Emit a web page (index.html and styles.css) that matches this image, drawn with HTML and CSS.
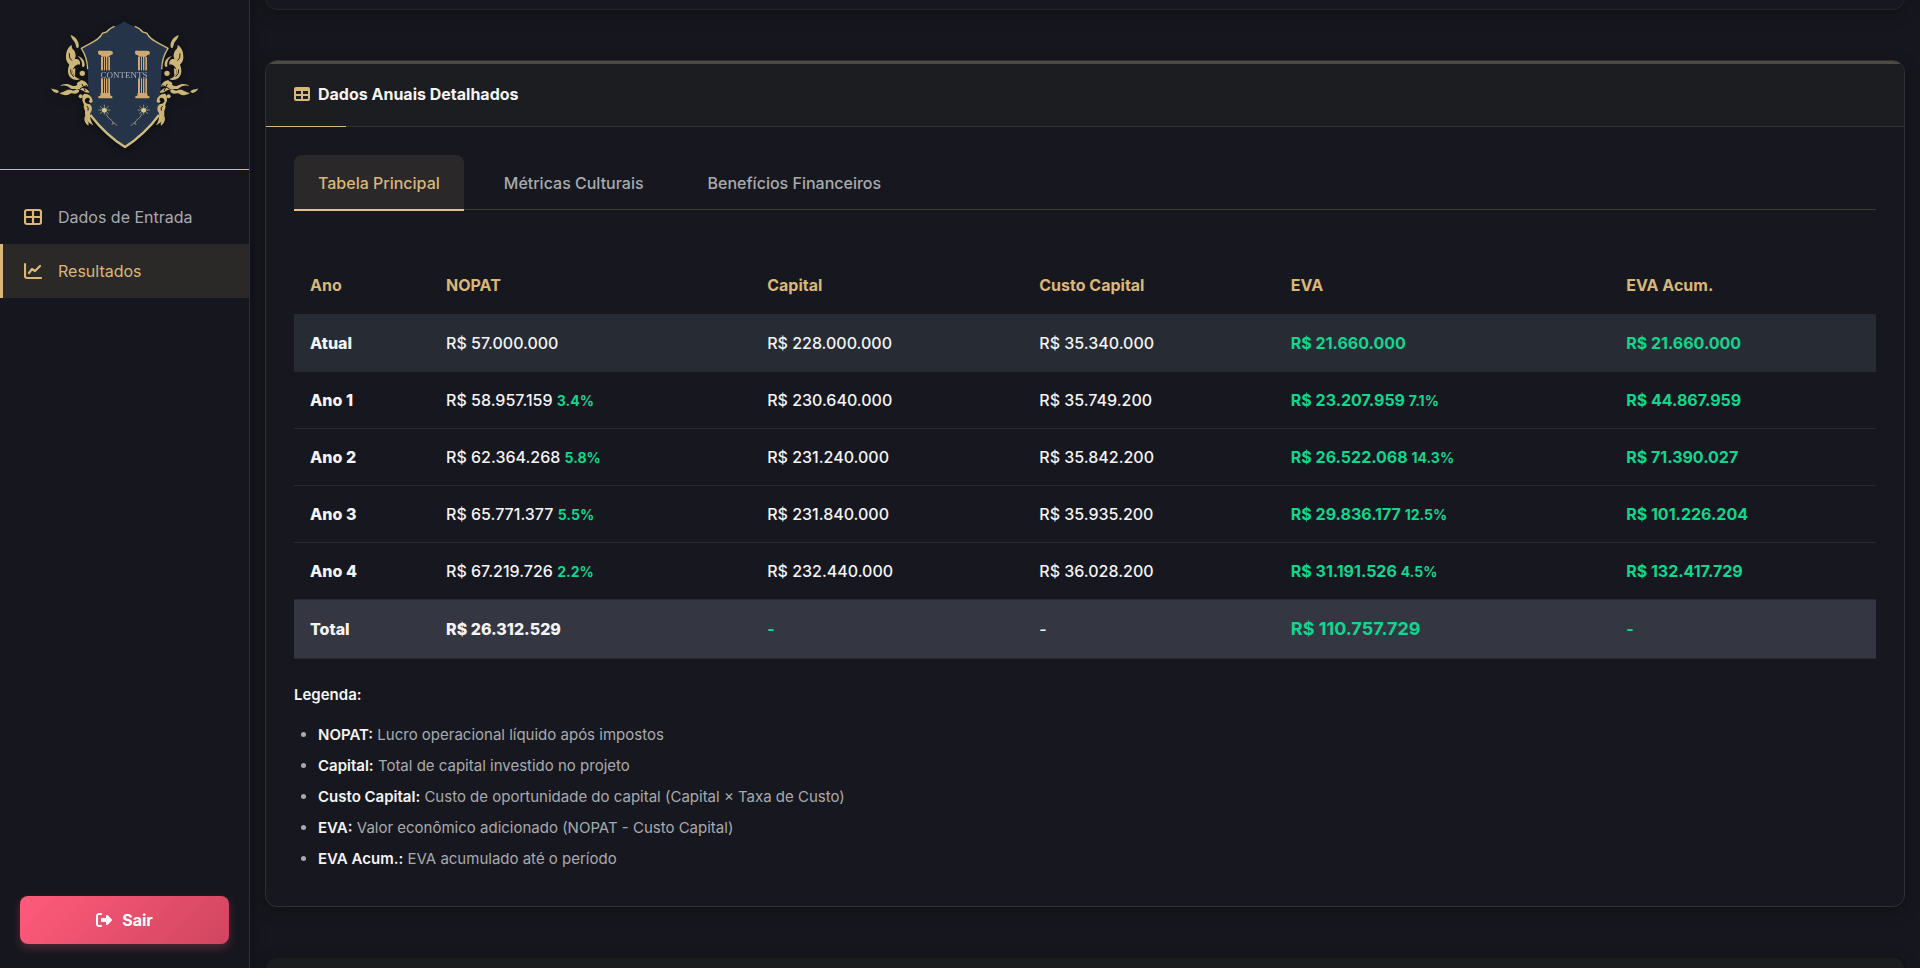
FILE: index.html
```html
<!DOCTYPE html>
<html lang="pt-BR">
<head>
    <meta charset="UTF-8">
    <meta name="viewport" content="width=device-width, initial-scale=1.0">
    <title>Resultados</title>
    <link rel="stylesheet" href="styles.css">
</head>
<body>
    <aside class="sidebar">
        <div class="sidebar-logo">
            <svg viewBox="0 0 510 450" role="img" aria-label="Contents">
                <defs>
                    <g id="ornament" fill="#cdb577">
                        <!-- upper leaves -->
                        <path d="M92 75 C106 80 119 94 116 111 C112 119 108 111 107 104 C104 92 94 88 92 75Z"/>
                        <path d="M96 105 C84 110 77 125 78 145 C79 156 84 160 88 164 C82 178 82 194 92 203 C102 211 114 211 120 207 C106 203 97 194 98 183 C100 169 111 161 120 164 C122 152 114 145 104 148 C110 138 106 126 101 120 C96 116 94 111 96 105Z"/>
                        <path d="M112 138 C124 140 135 151 134 166 C133 173 128 172 126 169 C128 156 122 145 112 138Z"/>
                        <path d="M99 178 L106 174 L105 199 C99 193 97 185 99 178Z"/>
                        <circle cx="127" cy="190" r="8"/>
                        <!-- side branch -->
                        <path d="M33 235 C39 239 45 237 53 241 C59 245 56 249 50 249 C41 247 36 242 33 235Z"/>
                        <path d="M60 229 C69 219 85 221 96 227 C107 231 113 226 122 211 C133 211 143 219 145 230 C136 226 134 232 127 231 C137 236 148 240 148 248 C137 251 131 241 122 239 C108 234 97 241 89 233 C80 226 70 224 60 229Z"/>
                        <path d="M58 249 C71 247 77 239 86 239 C95 239 101 244 107 239 C117 235 121 244 113 249 C104 254 95 247 89 252 C81 258 68 256 58 249Z"/>
                        <path d="M110 222 C114 214 121 213 128 215 L120 228Z"/>
                        <!-- lower curls -->
                        <circle cx="122" cy="259" r="6"/>
                        <path d="M133 251 C145 250 158 261 158 274 C155 281 148 279 146 274 C155 268 145 259 137 266 C132 271 135 279 143 281 C156 282 160 298 151 309 C149 320 151 332 160 346 C143 337 135 326 135 308 C137 302 132 298 131 290 C135 282 126 277 127 267 C127 259 128 254 133 251Z"/>
                        <path d="M136 316 C131 326 132 338 145 347 C148 338 143 332 140 327Z"/>
                        <g stroke="#16171e" stroke-width="3" fill="none">
                            <path d="M88 130 Q86 146 96 152 M92 178 Q90 192 101 200 M126 222 L136 243 M120 236 L141 226 M140 288 Q147 292 144 302"/>
                        </g>
                    </g>
                    <g id="column" fill="#cfa96f">
                        <path d="M174 124 Q177 121 182 122 H211 Q218 122 219 128 Q219 136 211 135 L207 140 H185 L182 135 Q173 137 174 124Z"/>
                        <path d="M183 141 H189 V250 H183Z M192 141 H195 V250 H192Z M198 138 H202 V250 H198Z M205 141 H210 V250 H205Z"/>
                        <path d="M182 249 H210 L212 257 L217 259 V265 H175 V259 L181 257Z"/>
                    </g>
                    <g id="flower" stroke="#b9b982" fill="none">
                        <path stroke-width="2" d="M175 300 H211 M193 284 V314 M180 289 L206 311 M206 289 L180 311"/>
                        <circle cx="193" cy="301" r="7" fill="#d9c98a" stroke="none"/>
                        <path stroke-width="2" d="M199 311 Q201 322 210 327 T220 342 M215 345 L222 338 L232 348"/>
                    </g>
                </defs>
                <path class="shield" d="M253 34 C237 47 219 48 200 66 L187 70 C180 91 148 100 124 115 C132 132 142 151 143 177 C145 209 144 232 148 259 C151 280 147 297 151 317 C176 351 219 390 255 413 C291 390 333 351 357 317 C361 297 357 280 360 259 C364 232 363 209 365 177 C366 151 376 132 384 115 C360 100 328 91 321 70 L308 66 C289 48 269 47 253 34Z"/>
                <path class="shield-edge" d="M224 49 Q210 53 200 66 L187 70 C180 91 148 100 124 115 C134 130 142 150 143 178 M284 49 Q298 53 308 66 L321 70 C328 91 360 100 384 115 C374 130 366 150 365 178"/>
                <path class="shield-tip" d="M151 315 C178 350 219 389 255 411 C291 389 332 350 357 315"/>
                <use href="#ornament"/>
                <use href="#ornament" transform="matrix(-1 0 0 1 508 0)"/>
                <use href="#column"/>
                <use href="#column" x="111"/>
                <use href="#flower"/>
                <use href="#flower" transform="matrix(-1 0 0 1 504 0)"/>
                <rect x="178" y="181" width="149" height="24" fill="#26344a"/>
                <text class="logo-name" x="252" y="203" text-anchor="middle">CONTENTS</text>
            </svg>
        </div>

        <nav class="sidebar-nav">
            <a href="#entrada" class="nav-item">
                <svg class="nav-icon" viewBox="0 0 18 18"><path fill="none" stroke="currentColor" stroke-width="2.200" d="M3 2 H15 Q17 2 17 4 V14 Q17 16 15 16 H3 Q1 16 1 14 V4 Q1 2 3 2Z M9 2 V16 M1 9 H17"/></svg>
                Dados de Entrada
            </a>
            <a href="#resultados" class="nav-item active">
                <svg class="nav-icon" viewBox="0 0 18 18"><path fill="none" stroke="currentColor" stroke-width="2.200" stroke-linecap="round" stroke-linejoin="round" d="M1 2 V14 Q1 16 3 16 H17 M5 11 L8 7 L11 9 L16 4"/></svg>
                Resultados
            </a>
        </nav>

        <div class="sidebar-footer">
            <button type="button" class="logout-btn">
                <svg viewBox="0 0 512 512" fill="currentColor"><path d="M377.900 105.900L500.700 228.700c7.200 7.200 11.300 17.100 11.300 27.300s-4.100 20.100-11.300 27.300L377.900 406.100c-6.400 6.400-15 9.900-24 9.900c-18.700 0-33.900-15.200-33.900-33.900l0-62.100-128 0c-17.700 0-32-14.300-32-32l0-64c0-17.700 14.300-32 32-32l128 0 0-62.100c0-18.700 15.200-33.900 33.900-33.900c9 0 17.600 3.600 24 9.900zM160 96L96 96c-17.700 0-32 14.300-32 32l0 256c0 17.700 14.300 32 32 32l64 0c17.700 0 32 14.300 32 32s-14.300 32-32 32l-64 0c-53 0-96-43-96-96L0 128C0 75 43 32 96 32l64 0c17.700 0 32 14.300 32 32s-14.300 32-32 32z"/></svg>
                Sair
            </button>
        </div>
    </aside>

    <main class="content">
        <section class="card card-prev"></section>

        <section class="card card-main">
            <header class="card-header">
                <svg class="card-icon" viewBox="0 0 16 14"><path fill="currentColor" fill-rule="evenodd" d="M2 0 H14 Q16 0 16 2 V12 Q16 14 14 14 H2 Q0 14 0 12 V2 Q0 0 2 0Z M2 4 V7 H7 V4Z M9 4 V7 H14 V4Z M2 9 V12 H7 V9Z M9 9 V12 H14 V9Z"/></svg>
                <h2>Dados Anuais Detalhados</h2>
            </header>

            <div class="card-body">
                <div class="tabs" role="tablist">
                    <button type="button" class="tab active" role="tab" aria-selected="true">Tabela Principal</button>
                    <button type="button" class="tab" role="tab" aria-selected="false">Métricas Culturais</button>
                    <button type="button" class="tab" role="tab" aria-selected="false">Benefícios Financeiros</button>
                </div>

                <table class="data-table">
                    <colgroup>
                        <col class="col-ano">
                        <col class="col-nopat">
                        <col class="col-capital">
                        <col class="col-custo">
                        <col class="col-eva">
                        <col class="col-acum">
                    </colgroup>
                    <thead>
                        <tr>
                            <th>Ano</th>
                            <th>NOPAT</th>
                            <th>Capital</th>
                            <th>Custo Capital</th>
                            <th>EVA</th>
                            <th>EVA Acum.</th>
                        </tr>
                    </thead>
                    <tbody>
                        <tr class="row-current">
                            <td><strong>Atual</strong></td>
                            <td>R$ 57.000.000</td>
                            <td>R$ 228.000.000</td>
                            <td>R$ 35.340.000</td>
                            <td class="positive">R$ 21.660.000</td>
                            <td class="positive">R$ 21.660.000</td>
                        </tr>
                        <tr>
                            <td><strong>Ano 1</strong></td>
                            <td>R$ 58.957.159 <small>3.4%</small></td>
                            <td>R$ 230.640.000</td>
                            <td>R$ 35.749.200</td>
                            <td class="positive">R$ 23.207.959 <small>7.1%</small></td>
                            <td class="positive">R$ 44.867.959</td>
                        </tr>
                        <tr>
                            <td><strong>Ano 2</strong></td>
                            <td>R$ 62.364.268 <small>5.8%</small></td>
                            <td>R$ 231.240.000</td>
                            <td>R$ 35.842.200</td>
                            <td class="positive">R$ 26.522.068 <small>14.3%</small></td>
                            <td class="positive">R$ 71.390.027</td>
                        </tr>
                        <tr>
                            <td><strong>Ano 3</strong></td>
                            <td>R$ 65.771.377 <small>5.5%</small></td>
                            <td>R$ 231.840.000</td>
                            <td>R$ 35.935.200</td>
                            <td class="positive">R$ 29.836.177 <small>12.5%</small></td>
                            <td class="positive">R$ 101.226.204</td>
                        </tr>
                        <tr>
                            <td><strong>Ano 4</strong></td>
                            <td>R$ 67.219.726 <small>2.2%</small></td>
                            <td>R$ 232.440.000</td>
                            <td>R$ 36.028.200</td>
                            <td class="positive">R$ 31.191.526 <small>4.5%</small></td>
                            <td class="positive">R$ 132.417.729</td>
                        </tr>
                        <tr class="row-total">
                            <td><strong>Total</strong></td>
                            <td><strong>R$ 26.312.529</strong></td>
                            <td class="positive">-</td>
                            <td>-</td>
                            <td class="positive total-eva">R$ 110.757.729</td>
                            <td class="positive">-</td>
                        </tr>
                    </tbody>
                </table>

                <div class="legend">
                    <p><strong>Legenda:</strong></p>
                    <ul>
                        <li><strong>NOPAT:</strong> Lucro operacional líquido após impostos</li>
                        <li><strong>Capital:</strong> Total de capital investido no projeto</li>
                        <li><strong>Custo Capital:</strong> Custo de oportunidade do capital (Capital × Taxa de Custo)</li>
                        <li><strong>EVA:</strong> Valor econômico adicionado (NOPAT - Custo Capital)</li>
                        <li><strong>EVA Acum.:</strong> EVA acumulado até o período</li>
                    </ul>
                </div>
            </div>
        </section>

        <section class="card card-next"></section>
    </main>
</body>
</html>
```
FILE: styles.css
```css
:root {
    --bg: #16171e;
    --surface: #1c1d21;
    --gold: #d9b778;
    --green: #10d68f;
    --text: #f4f4f6;
    --muted: #a9aaae;
    --line: #303135;
}

* {
    margin: 0;
    padding: 0;
    box-sizing: border-box;
}

body {
    display: flex;
    height: 100vh;
    overflow: hidden;
    background-color: var(--bg);
    color: var(--text);
    font-family: 'Inter', sans-serif;
    font-size: 16px;
    line-height: 24px;
}

button {
    border: none;
    font: inherit;
    cursor: pointer;
}

/* Sidebar */
.sidebar {
    display: flex;
    flex-direction: column;
    flex: none;
    width: 250px;
    border-right: 1px solid var(--line);
    box-shadow: 2px 0 12px rgba(0, 0, 0, 0.3);
}

.sidebar-logo {
    display: flex;
    justify-content: center;
    padding: 10px 0 9px;
    border-bottom: 1px solid var(--gold);
}

.sidebar-logo svg {
    width: 170px;
    height: 150px;
    filter: drop-shadow(0 3px 5px rgba(0, 0, 0, 0.4));
}

.shield {
    fill: #26344a;
}

.shield-edge {
    fill: none;
    stroke: #cdb577;
    stroke-width: 4;
}

.shield-tip {
    fill: none;
    stroke: #cdbd80;
    stroke-width: 7;
}

.logo-name {
    fill: #a9b0b8;
    font-family: 'Liberation Serif', serif;
    font-size: 27px;
}

.sidebar-nav {
    flex: 1;
    padding-top: 20px;
}

.nav-item {
    display: flex;
    align-items: center;
    gap: 16px;
    height: 54px;
    padding-left: 21px;
    border-left: 3px solid transparent;
    color: var(--muted);
    text-decoration: none;
}

.nav-item.active {
    border-left-color: var(--gold);
    background-color: #2b2928;
    color: var(--gold);
}

.nav-icon {
    width: 18px;
    height: 18px;
    color: var(--gold);
}

.sidebar-footer {
    padding: 20px 20px 24px;
}

.logout-btn {
    display: flex;
    align-items: center;
    justify-content: center;
    gap: 10px;
    width: 100%;
    height: 48px;
    border-radius: 8px;
    background: linear-gradient(135deg, #ff5b7a, #d0455f);
    box-shadow: 0 4px 10px rgba(255, 91, 122, 0.25);
    color: #fff;
    font-weight: 700;
}

.logout-btn svg {
    width: 16px;
    height: 16px;
}

/* Content */
.content {
    display: flex;
    flex-direction: column;
    flex: 1;
    gap: 50px;
    min-width: 0;
    padding: 0 15px;
}

.card {
    position: relative;
    flex: none;
    overflow: hidden;
    border: 1px solid var(--line);
    border-radius: 12px;
    background-color: #17181f;
    box-shadow: 0 4px 16px rgba(0, 0, 0, 0.3);
}

.card-prev {
    height: 24px;
    margin-top: -14px;
    border-color: #232428;
}

/* continues below the fold */
.card-next {
    flex: 1;
    border-color: #131419;
    border-bottom: none;
    border-radius: 12px 12px 0 0;
    background-color: var(--surface);
}

.card-main::before {
    content: '';
    position: absolute;
    z-index: 1;
    top: 0;
    left: 0;
    right: 0;
    height: 3px;
    background-color: #4e4a40;
}

.card-header {
    position: relative;
    display: flex;
    align-items: center;
    gap: 8px;
    height: 66px;
    padding: 0 28px;
    border-bottom: 1px solid var(--line);
    background-color: var(--surface);
}

.card-header::after {
    content: '';
    position: absolute;
    left: 0;
    bottom: -1px;
    width: 80px;
    height: 1px;
    background-color: var(--gold);
}

.card-header h2 {
    font-size: 16px;
    font-weight: 700;
}

.card-icon {
    width: 16px;
    height: 14px;
    color: var(--gold);
}

.card-body {
    padding: 28px;
}

/* Tabs */
.tabs {
    display: flex;
    gap: 16px;
    margin-bottom: 47px;
    border-bottom: 1px solid #3b3b3a;
}

.tab {
    height: 56px;
    margin-bottom: -2px;
    padding: 2px 24px 0;
    border-bottom: 2px solid transparent;
    background: none;
    color: var(--muted);
    font-weight: 500;
}

.tab.active {
    border-bottom-color: #e0c18c;
    border-radius: 8px 8px 0 0;
    background-color: #2a2828;
    color: var(--gold);
}

/* Table */
.data-table {
    width: 100%;
    border-collapse: collapse;
    table-layout: fixed;
}

.col-ano {
    width: 8.6%;
}

.col-nopat {
    width: 20.3%;
}

.col-capital {
    width: 17.2%;
}

.col-custo {
    width: 15.9%;
}

.col-eva {
    width: 21.2%;
}

.col-acum {
    width: 16.8%;
}

.data-table th,
.data-table td {
    height: 57px;
    padding: 0 16px;
    border-bottom: 1px solid #292a2e;
    text-align: left;
    font-weight: 500;
}

.data-table th {
    color: var(--gold);
    font-weight: 700;
}

.data-table strong {
    font-weight: 800;
}

.data-table small {
    color: var(--green);
    font-size: 14px;
    font-weight: 700;
    line-height: 14px;
}

.data-table .positive {
    color: var(--green);
    font-weight: 700;
}

.row-current {
    background-color: #272c34;
}

.row-total {
    background-color: #343742;
}

.data-table .row-total td {
    height: 59px;
}

.data-table .total-eva {
    font-size: 18px;
}

/* Legend */
.legend {
    margin-top: 24px;
    color: var(--muted);
    font-size: 15px;
}

.legend strong {
    color: var(--text);
    font-weight: 600;
}

.legend ul {
    margin-top: 16px;
    padding-left: 24px;
}

.legend li {
    margin-bottom: 7px;
}
```
